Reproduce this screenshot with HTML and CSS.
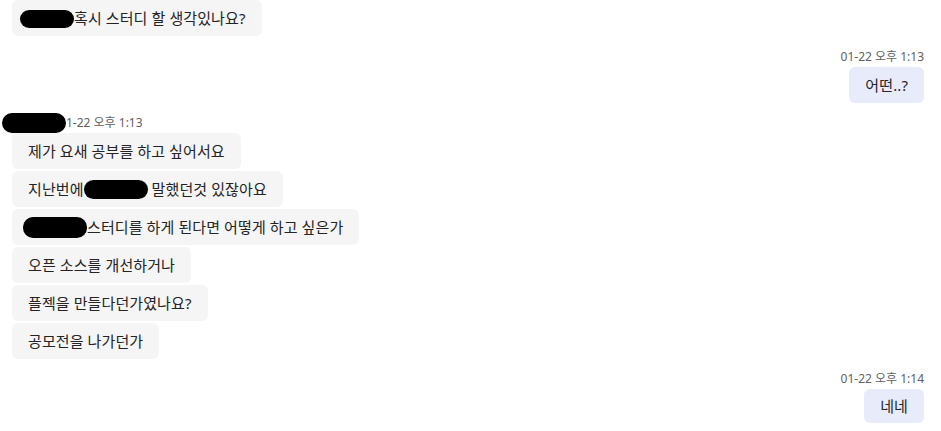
FILE: index.html
```html
<!DOCTYPE html>
<html lang="ko">
<head>
<meta charset="utf-8">
<link rel="stylesheet" href="styles.css">
</head>
<body>
<div class="chat">
  <div class="msg left first">
    <div class="bubble"><span class="redact r-first"></span>혹시 스터디 할 생각있나요?</div>
  </div>
  <div class="msg right gap-a">
    <div class="meta">01-22 오후 1:13</div>
    <div class="bubble mine">어떤..?</div>
  </div>
  <div class="msg left gap-b">
    <div class="meta"><span class="redact r-name"></span>1-22 오후 1:13</div>
    <div class="bubble">제가 요새 공부를 하고 싶어서요</div>
    <div class="bubble">지난번에<span class="redact r-mid"></span> 말했던것 있잖아요</div>
    <div class="bubble"><span class="redact r-start"></span>스터디를 하게 된다면 어떻게 하고 싶은가</div>
    <div class="bubble">오픈 소스를 개선하거나</div>
    <div class="bubble">플젝을 만들다던가였나요?</div>
    <div class="bubble">공모전을 나가던가</div>
  </div>
  <div class="msg right gap-c">
    <div class="meta">01-22 오후 1:14</div>
    <div class="bubble mine short">네네</div>
  </div>
</div>
</body>
</html>
```

FILE: styles.css
```css
html, body {
  margin: 0;
  padding: 0;
  background: #ffffff;
}

body {
  font-family: "Noto Sans", "Noto Sans CJK KR", sans-serif;
  color: #242424;
  font-size: 15px;
}

.chat {
  display: flex;
  flex-direction: column;
  padding: 0 17px 0 12px;
}

.msg {
  display: flex;
  flex-direction: column;
  gap: 2px;
}

.msg.left {
  align-items: flex-start;
}

.msg.right {
  align-items: flex-end;
}

.gap-a {
  margin-top: 12px;
}

.gap-b {
  margin-top: 11px;
}

.gap-c {
  margin-top: 11px;
}

.meta {
  font-size: 12px;
  line-height: 17px;
  height: 17px;
  color: #616161;
  white-space: nowrap;
}

.bubble {
  background: #f5f5f5;
  border-radius: 6px;
  padding: 0 16px;
  line-height: 36px;
  height: 36px;
  box-sizing: border-box;
  white-space: pre;
  letter-spacing: 0.1px;
}

.bubble.mine {
  background: #e8ebfa;
}

.bubble.short {
  height: 34px;
  line-height: 34px;
}

.redact {
  display: inline-block;
  background: #000;
  border-radius: 10px;
  vertical-align: middle;
  position: relative;
  top: -1px;
}

.r-first {
  width: 54px;
  height: 18px;
  margin-left: -8px;
}

.r-name {
  width: 64px;
  height: 20px;
  margin-left: -10px;
}

.r-mid {
  width: 64px;
  height: 19px;
}

.r-start {
  width: 64px;
  height: 21px;
  margin-left: -5px;
}
```
